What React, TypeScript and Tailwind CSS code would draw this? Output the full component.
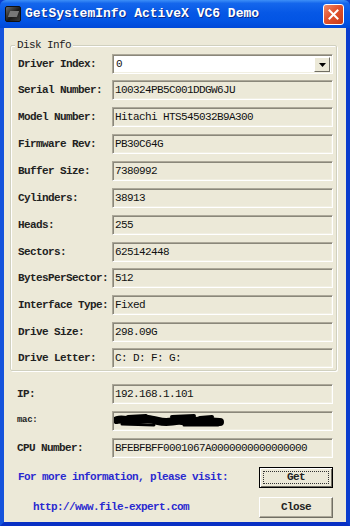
import React from "react";

const mono = { fontFamily: '"Liberation Mono", "DejaVu Sans Mono", monospace' };

const rows: [string, string][] = [
  ["Serial Number:", "100324PB5C001DDGW6JU"],
  ["Model Number:", "Hitachi HTS545032B9A300"],
  ["Firmware Rev:", "PB30C64G"],
  ["Buffer Size:", "7380992"],
  ["Cylinders:", "38913"],
  ["Heads:", "255"],
  ["Sectors:", "625142448"],
  ["BytesPerSector:", "512"],
  ["Interface Type:", "Fixed"],
  ["Drive Size:", "298.09G"],
  ["Drive Letter:", "C: D: F: G:"],
];
const gaps = [6, 7, 7, 7, 7, 7, 7, 6, 7, 7, 6];

function Field({ children }: { children?: React.ReactNode }) {
  return (
    <div className="relative w-[221px] h-[20px] bg-[#ece9d8] border-t border-l border-t-[#aca899] border-l-[#aca899] border-b border-r border-b-white border-r-white shadow-[inset_1px_1px_0_#8a877a,inset_-1px_-1px_0_#f1efe2] flex items-center pl-[2px] text-[11px] tracking-[-0.6px] text-[#111] overflow-hidden whitespace-nowrap">
      {children}
    </div>
  );
}

export default function App() {
  return (
    <div className="w-[350px] h-[526px] flex flex-col overflow-hidden bg-[#0a3fd0]" style={mono}>
      {/* title bar */}
      <div className="h-[28px] flex items-center rounded-t-[6px] bg-[linear-gradient(to_bottom,#3d8ff7_0%,#1466ec_12%,#0658e6_45%,#0254e4_75%,#0048d8_100%)] pl-[5px] pr-[6px]">
        <div className="w-[16px] h-[16px] rounded-[2px] bg-[linear-gradient(135deg,#6a6a6a,#1a1a1a_55%,#3a3a3a)] border border-[#101010] flex items-center justify-center">
          <div className="w-[9px] h-[6px] bg-[#777] skew-x-[-20deg]" />
        </div>
        <span className="ml-[4px] text-white font-bold text-[13px] tracking-[0px] [text-shadow:1px_1px_0_#0a2a8a]">
          GetSystemInfo ActiveX VC6 Demo
        </span>
        <div className="ml-auto w-[21px] h-[21px] rounded-[3px] border border-white bg-[linear-gradient(135deg,#f08b6a,#e1522e_45%,#c83a18)] flex items-center justify-center">
          <svg width="11" height="11" viewBox="0 0 11 11">
            <path d="M1.5 1.5 L9.5 9.5 M9.5 1.5 L1.5 9.5" stroke="white" strokeWidth="2" strokeLinecap="square" />
          </svg>
        </div>
      </div>
      {/* body */}
      <div className="flex-1 border-l-4 border-r-4 border-b-4 border-l-[#1553dc] border-r-[#0a3ccd] border-b-[#0930c4] bg-[#ece9d8] flex flex-col">
        {/* group box */}
        <div className="relative ml-[6px] mt-[17px] w-[327px] border border-[#d0d0bf] rounded-[2px] shadow-[inset_1px_1px_0_#fff,1px_1px_0_#fff] pt-[8px] pb-[2px] pl-[7px]">
          <span className="absolute left-[4px] top-[-8px] bg-[#ece9d8] px-[2px] text-[11px] tracking-[-0.6px] leading-[14px] text-[#222]">
            Disk Info
          </span>
          <div className="flex items-center">
            <div className="w-[94px] text-[11px] tracking-[-0.6px] font-bold text-[#222]">Driver Index:</div>
            <div className="relative w-[221px] h-[20px] bg-white border-t border-l border-t-[#aca899] border-l-[#aca899] border-b border-r border-b-white border-r-white shadow-[inset_1px_1px_0_#8a877a,inset_-1px_-1px_0_#f1efe2] flex items-center pl-[3px] text-[11px] text-[#111]">
              0
              <div className="absolute right-[2px] top-[2px] w-[16px] h-[15px] bg-[#ece9d8] border border-t-white border-l-white border-b-[#716f64] border-r-[#716f64] flex items-center justify-center">
                <svg width="7" height="4" viewBox="0 0 7 4">
                  <path d="M0 0 H7 L3.5 4 Z" fill="#000" />
                </svg>
              </div>
            </div>
          </div>
          {rows.map(([l, v], i) => (
            <div key={l} className="flex items-center" style={{ marginTop: gaps[i] }}>
              <div className="w-[94px] text-[11px] tracking-[-0.6px] font-bold text-[#222] whitespace-nowrap">{l}</div>
              <Field>{v}</Field>
            </div>
          ))}
        </div>

        {/* bottom fields */}
        <div className="pl-[13px] mt-[13px]">
          <div className="flex items-center">
            <div className="w-[95px] text-[11px] tracking-[-0.6px] font-bold text-[#222]">IP:</div>
            <Field>192.168.1.101</Field>
          </div>
          <div className="flex items-center mt-[7px]">
            <div className="w-[95px] text-[9px] tracking-[-0.3px] font-bold text-[#222]">mac:</div>
            <Field>
              <svg width="112" height="16" viewBox="0 0 112 16" className="ml-[-1px]">
                <path
                  d="M3 7 C10 5,16 9,24 7 S36 6,44 8 S54 9,62 8 S74 10,82 8 S96 9,106 9"
                  stroke="#000"
                  strokeWidth="8"
                  fill="none"
                  strokeLinecap="round"
                />
                <path d="M14 4 L32 3 M58 4 L80 3 M86 5 L98 4" stroke="#000" strokeWidth="4" strokeLinecap="round" />
                <path d="M8 11 L40 12 M70 12 L104 12" stroke="#000" strokeWidth="3" strokeLinecap="round" />
              </svg>
            </Field>
          </div>
          <div className="flex items-center mt-[7px]">
            <div className="w-[95px] text-[11px] tracking-[-0.6px] font-bold text-[#222]">CPU Number:</div>
            <Field>BFEBFBFF0001067A0000000000000000</Field>
          </div>
        </div>

        {/* footer */}
        <div className="flex items-center mt-[9px] pl-[14px]">
          <div className="w-[241px] text-[11px] tracking-[-0.6px] font-bold text-[#2a2ad0] whitespace-nowrap">
            For more information, please visit:
          </div>
          <div className="w-[74px] h-[21px] border border-black bg-[#ece9d8] shadow-[inset_1px_1px_0_#fff,inset_-1px_-1px_0_#716f64] flex items-center justify-center p-[3px]">
            <div className="w-full h-full border border-dotted border-[#333] flex items-center justify-center text-[11px] tracking-[-0.6px] font-bold text-[#222]">
              Get
            </div>
          </div>
        </div>
        <div className="flex items-center mt-[9px] pl-[29px]">
          <div className="w-[226px] text-[11px] tracking-[-0.6px] font-bold text-[#2a2ad0] whitespace-nowrap">
            http://www.file-expert.com
          </div>
          <div className="w-[74px] h-[21px] bg-[#ece9d8] border border-t-white border-l-white border-b-[#716f64] border-r-[#716f64] shadow-[inset_-1px_-1px_0_#aca899] flex items-center justify-center text-[11px] tracking-[-0.6px] font-bold text-[#222]">
            Close
          </div>
        </div>
      </div>
    </div>
  );
}
